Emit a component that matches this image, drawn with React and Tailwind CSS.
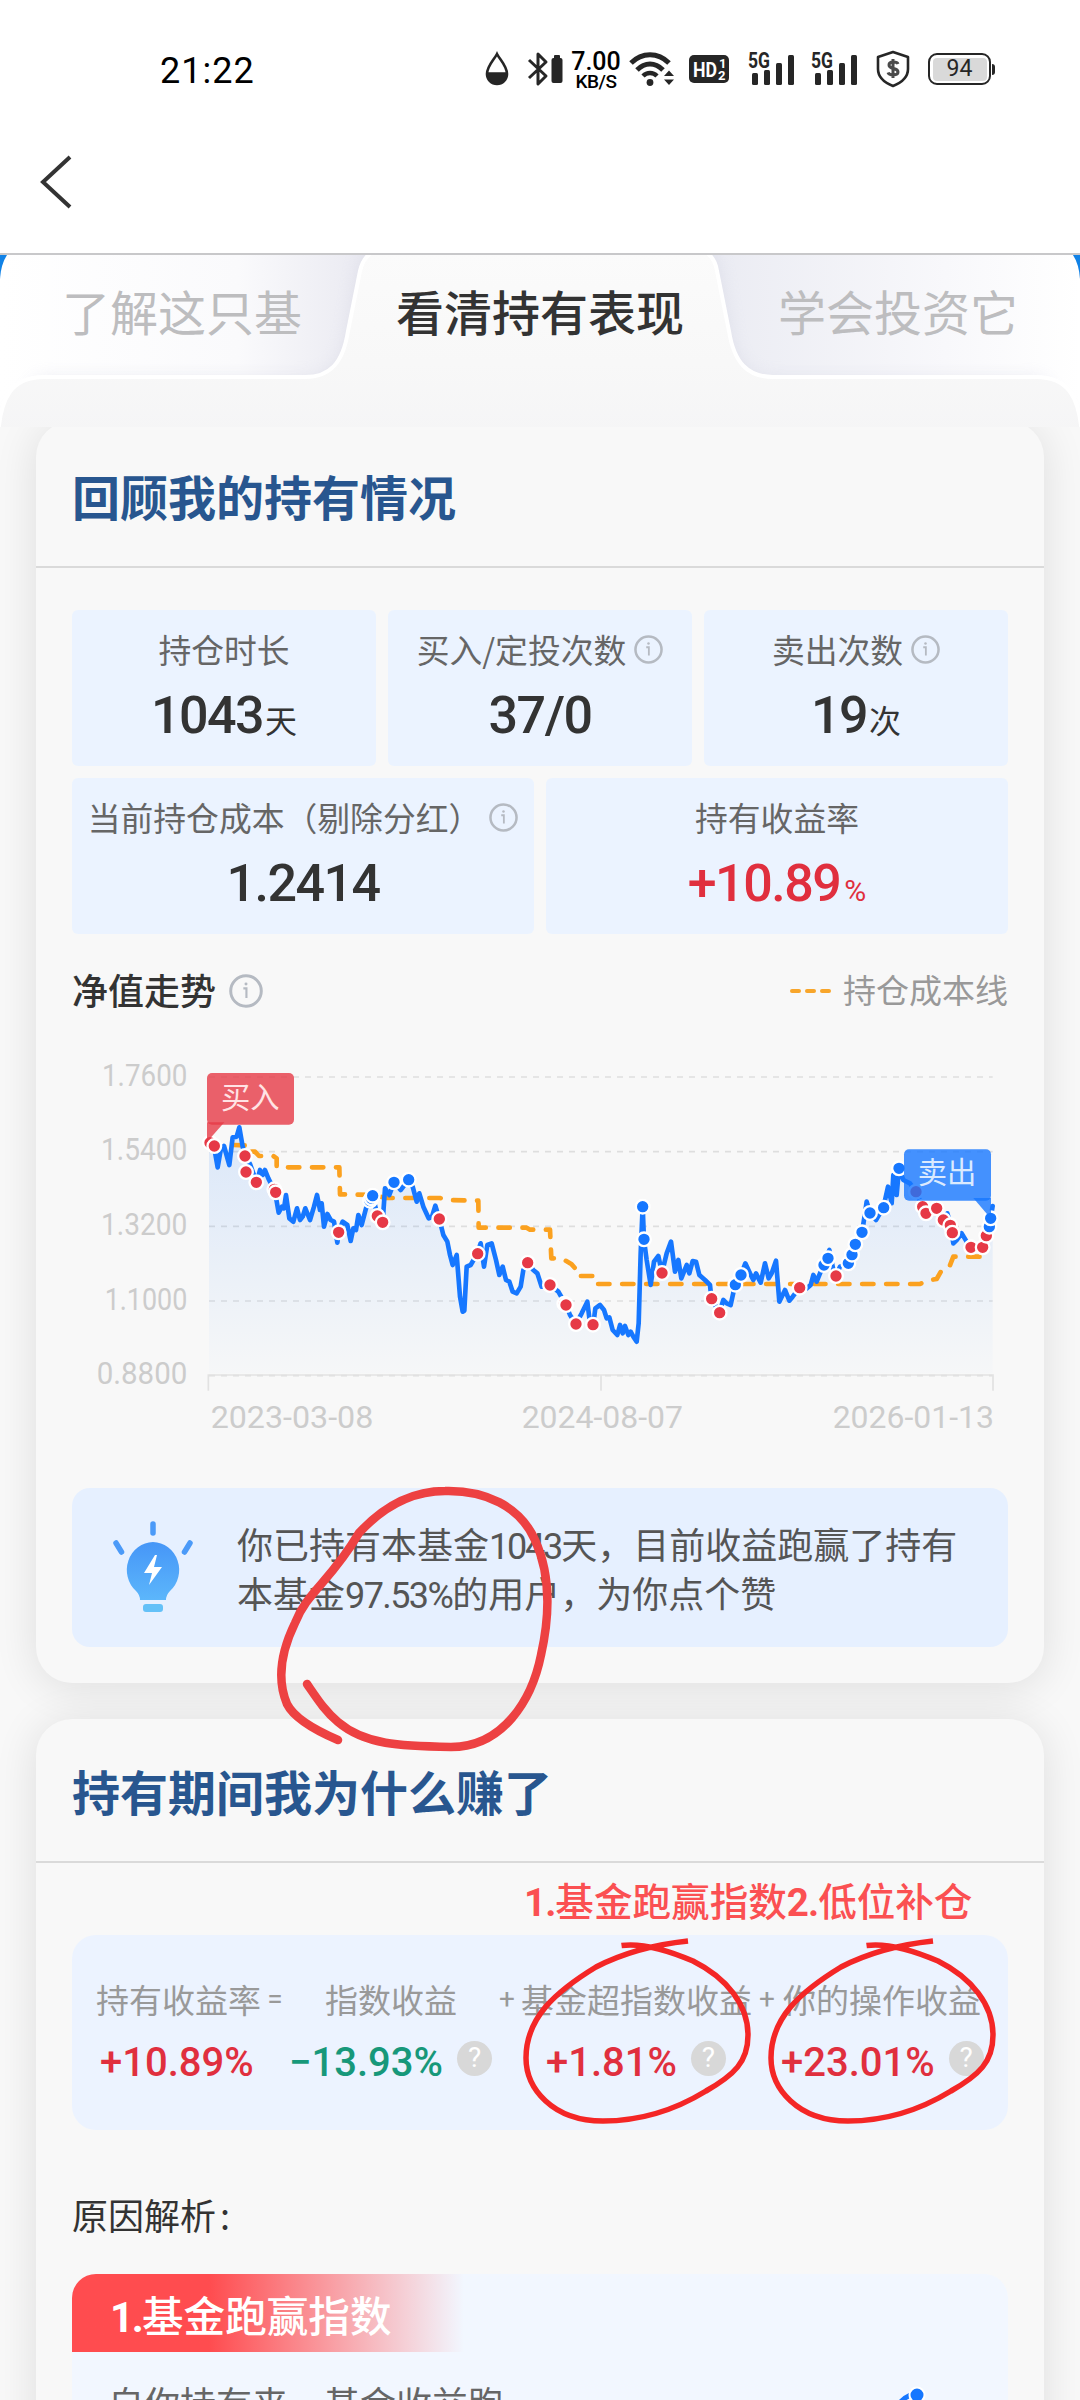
const CJK = "font-['Noto_Sans_CJK_SC',sans-serif]";
const NUM = "font-['Roboto','Noto_Sans_CJK_SC',sans-serif]";

// chart coordinates: 3 units = 1px
const NAV_LINE =
  "440,300 462,320 473,382 482,330 492,318 508,375 518,292 530,290 538,262 548,320 556,350 570,372 580,400 590,428 600,390 608,405 615,390 625,415 645,455 656,518 666,500 672,505 678,465 688,535 700,545 711,505 720,540 728,530 736,505 750,540 762,500 771,465 780,510 785,490 792,560 802,522 812,540 822,545 832,608 836,577 848,545 862,555 872,603 880,565 888,570 895,525 905,555 918,505 938,467 952,525 968,547 975,445 988,465 1002,427 1022,450 1045,420 1058,440 1070,485 1078,460 1090,500 1106,535 1116,530 1126,497 1138,537 1150,585 1162,605 1170,645 1178,675 1190,645 1200,770 1208,815 1213,812 1220,680 1232,675 1252,640 1262,610 1272,680 1282,615 1295,610 1308,660 1318,705 1328,680 1338,720 1348,725 1358,755 1370,760 1382,740 1390,690 1402,668 1420,690 1432,700 1445,740 1470,735 1495,755 1518,795 1530,825 1548,852 1565,820 1582,785 1590,850 1600,853 1606,805 1620,795 1632,810 1640,835 1648,832 1658,870 1672,885 1680,855 1688,880 1695,858 1705,885 1712,875 1720,890 1730,905 1736,850 1742,640 1748,500 1752,600 1760,660 1772,735 1782,665 1795,648 1806,698 1820,640 1833,605 1845,695 1855,660 1864,715 1880,675 1888,700 1898,663 1908,665 1918,705 1935,720 1950,735 1954,775 1978,818 1990,780 2000,790 2012,795 2025,735 2043,705 2056,670 2070,700 2080,720 2088,700 2102,728 2115,670 2126,715 2135,700 2148,662 2158,785 2175,750 2188,782 2198,770 2219,743 2240,745 2252,735 2260,705 2270,725 2290,675 2308,630 2320,690 2328,708 2340,680 2365,670 2375,643 2385,613 2406,577 2415,520 2420,485 2430,520 2448,540 2470,503 2484,440 2495,490 2500,405 2510,465 2517,385 2530,420 2550,430 2568,455 2588,500 2598,520 2628,505 2650,540 2662,520 2672,555 2680,610 2690,600 2705,580 2720,605 2734,622 2768,622 2780,587 2788,560 2792,535 2798,498";

const COST_LINE =
  "520,315 556,316 558,335 585,335 597,348 640,348 650,355 650,382 838,382 840,463 935,465 980,474 1140,474 1165,480 1255,482 1256,563 1400,563 1410,569 1470,569 1474,655 1505,655 1535,673 1550,690 1552,708 1598,708 1602,732 2580,732 2600,722 2630,717 2650,682 2670,676 2680,650 2782,650";

const POINTS = [
  ["b", 450, 308], ["b", 463, 318], ["b", 555, 348], ["b", 558, 396], ["b", 589, 427], ["b", 643, 448], ["b", 647, 457],
  ["b", 836, 577], ["s", 930, 482], ["s", 934, 475], ["s", 938, 467], ["b", 952, 528], ["b", 968, 547],
  ["s", 1002, 427], ["s", 1046, 419], ["b", 1138, 537], ["b", 1253, 641], ["b", 1403, 668], ["b", 1470, 735],
  ["b", 1513, 791], ["b", 1518, 795], ["b", 1548, 852], ["b", 1599, 854], ["s", 1748, 500], ["s", 1752, 598],
  ["b", 1806, 699], ["b", 1955, 776], ["b", 1979, 818], ["s", 2026, 734], ["s", 2043, 705], ["b", 2219, 743],
  ["s", 2292, 675], ["s", 2304, 655], ["b", 2328, 708], ["s", 2365, 670], ["s", 2376, 644], ["s", 2386, 613],
  ["s", 2406, 577], ["s", 2430, 519], ["s", 2471, 503], ["s", 2517, 385], ["b", 2568, 455], ["b", 2588, 500],
  ["b", 2598, 520], ["b", 2630, 505], ["b", 2650, 540], ["b", 2671, 556], ["b", 2677, 578], ["b", 2733, 622],
  ["b", 2768, 622], ["b", 2779, 587], ["s", 2788, 560], ["s", 2792, 535],
];

const Y_AXIS = [
  { label: "1.7600", y: 111, w: 256 },
  { label: "1.5400", y: 335, w: 259 },
  { label: "1.3200", y: 559, w: 259 },
  { label: "1.1000", y: 783, w: 248 },
  { label: "0.8800", y: 1007, w: 272 },
];

const InfoIcon = ({ className = "size-7" }) => (
  <svg className={className} viewBox="0 0 32 32" fill="none" stroke="#b5bac2">
    <circle cx="16" cy="16" r="14.4" strokeWidth="2.8" />
    <path d="M13.5 13.5H16.4V22.5" strokeWidth="2" />
    <circle cx="16" cy="9.4" r="1.4" fill="#b5bac2" stroke="none" />
  </svg>
);

const Help = ({ className = "" }) => (
  <span className={`flex size-[35px] shrink-0 items-center justify-center rounded-full bg-[#d8d8d8] text-[28px] font-normal leading-none text-white ${NUM} ${className}`}>
    ?
  </span>
);

const Signal = ({ className }) => (
  <svg className={className} width="47" height="50" viewBox="0 -8 47 50" fill="#262626">
    <text x="0" y="16" fontFamily="Roboto" fontWeight="700" fontSize="22" textLength="22" lengthAdjust="spacingAndGlyphs">5G</text>
    <rect x="4" y="21" width="6" height="12" rx="1.5" />
    <rect x="16" y="18" width="6" height="15" rx="1.5" />
    <rect x="28" y="11" width="6" height="22" rx="1.5" />
    <rect x="40" y="3" width="6" height="30" rx="1.5" />
  </svg>
);

const StatusBar = () => (
  <div className={`flex h-[138px] items-center pl-[160px] text-black ${NUM}`}>
    <span className="w-[324px] pt-[3px] text-[36px] tracking-[1px]">21:22</span>
    <svg width="26" height="36" viewBox="0 0 26 36">
      <path d="M13 3C10 9 3 15 3 23A10 10 0 0 0 23 23C23 15 16 9 13 3Z" fill="white" stroke="#262626" strokeWidth="2.6" />
      <path d="M3 22H23A10 10.5 0 0 1 3 22Z" fill="#262626" stroke="#262626" strokeWidth="1.5" />
    </svg>
    <svg className="ml-[17px]" width="36" height="36" viewBox="0 0 36 36" fill="none" stroke="#262626">
      <path d="M2 9L19 25L11 33V3L19 11L2 27" strokeWidth="3" strokeLinejoin="round" />
      <rect x="24.500" y="7" width="11" height="25" rx="2" fill="#262626" stroke="none" />
      <rect x="27" y="4" width="6" height="4" rx="1" fill="#262626" stroke="none" />
    </svg>
    <div className="ml-2 flex w-[50px] flex-col items-center pt-[3px] font-medium leading-none">
      <span className="text-[25px] leading-[19px]">7.00</span>
      <span className="mt-[2px] text-[19px] leading-[17px] tracking-[-0.5px]">KB/S</span>
    </div>
    <svg className="ml-[8px]" width="46" height="36" viewBox="0 0 46 36" fill="none" stroke="#262626">
      <path d="M2 12C13 1 29 1 40 12" strokeWidth="5" />
      <path d="M8 19C16 11 26 11 34 19" strokeWidth="5" />
      <path d="M14 25C18 21 24 21 28 25" strokeWidth="4.500" />
      <circle cx="21" cy="31.500" r="3.400" fill="#262626" stroke="none" />
      <path d="M35 25L40 19.500L45 25ZM35 28.500L40 34L45 28.500Z" fill="#262626" stroke="none" />
    </svg>
    <svg className="ml-[14px]" width="40" height="32" viewBox="0 0 40 32">
      <rect y="2" width="40" height="28" rx="5" fill="#262626" />
      <g fill="white" fontFamily="Roboto" fontWeight="700">
        <text x="4" y="23.500" fontSize="21" textLength="24" lengthAdjust="spacingAndGlyphs">HD</text>
        <text x="30" y="15" fontSize="13">1</text>
        <text x="29" y="27" fontSize="13">2</text>
      </g>
    </svg>
    <Signal className="ml-[19px]" />
    <Signal className="ml-[16px]" />
    <svg className="ml-[18px]" width="34" height="38" viewBox="0 0 34 38" fill="none" stroke="#262626">
      <path d="M17 2L32 7V19C32 27 27 32 17 36C7 32 2 27 2 19V7Z" strokeWidth="2.600" strokeLinejoin="round" />
      <path d="M22 14C21 11.500 13 11 13 15C13 20 22 17 22 22C22 26 13 25.500 12 22.500M17 9V28" stroke="#4a4a4a" strokeWidth="3" />
    </svg>
    <div className="ml-[18px] flex h-[32px] w-[63px] rounded-[9px] border-[2.500px] border-[#262626] p-[2.500px]">
      <span className="flex flex-1 items-center justify-center rounded-[4px] bg-[#d9d9d9] text-[23px] text-[#262626]">94</span>
    </div>
    <span className="ml-[1px] h-[11px] w-[3px] rounded-r bg-[#262626]" />
  </div>
);

const TabBar = () => (
  <div className="relative z-10 h-[172px] overflow-hidden">
    <svg className="absolute inset-0" width="1080" height="172" viewBox="0 0 1080 172">
      <defs>
        <linearGradient id="tabL">
          <stop offset="0" stopColor="#ffffff" />
          <stop offset="0.22" stopColor="#fafafc" />
          <stop offset="0.33" stopColor="#ebebf2" />
        </linearGradient>
        <linearGradient id="tabR">
          <stop offset="0.33" stopColor="#ebecf3" />
          <stop offset="0.75" stopColor="#f8f8fb" />
          <stop offset="1" stopColor="#ffffff" />
        </linearGradient>
        <linearGradient id="panel" x2="0" y2="1">
          <stop offset="0" stopColor="#fbfbfb" />
          <stop offset="0.6" stopColor="#f8f8f8" />
          <stop offset="1" stopColor="#f5f5f6" />
        </linearGradient>
        <filter id="rim" x="-10%" y="-20%" width="120%" height="140%">
          <feGaussianBlur stdDeviation="9" />
        </filter>
      </defs>
      <rect width="1080" height="172" fill="#1182e6" />
      <path d="M0 172V24Q1 9 7 0H1080V172Z" fill="url(#tabL)" />
      <path d="M1080 172V24Q1079 9 1073 0H540V172Z" fill="url(#tabR)" />
      <path d="M1073 0H1080V24Q1079 9 1073 0Z" fill="#1182e6" />
      <path d="M40 124H305C330 124 344 108 349 76L360 12Q363 0 372 -8H706Q716 0 718 12L729 76C734 108 748 124 773 124H1040L1090 190H-10Z" fill="#c9cadb" opacity="0.42" filter="url(#rim)" />
      <path d="M-2 182C0 142 12 122 44 122H305C330 122 343 108 348 76L360 16Q363 2 374 -4H704Q715 2 717 16L729 76C734 108 748 122 773 122H1036C1068 122 1080 142 1082 182Z" fill="url(#panel)" stroke="#ffffff" strokeWidth="4" />
    </svg>
    <div className="relative flex h-[109px] items-center justify-between px-[62px] text-[48px] leading-none">
      <span className="w-[300px] whitespace-nowrap text-[#bdbdbf]">了解这只基</span>
      <span className="font-medium text-[#333333]">看清持有表现</span>
      <span className="w-[300px] whitespace-nowrap text-right text-[#bdbdbf]">学会投资它</span>
    </div>
  </div>
);

const CardTitle = ({ children, className }) => (
  <div className={`flex items-center border-b-2 border-[#dadada] px-9 ${className}`}>
    <h2 className="text-[48px] font-bold leading-none text-[#28568f]">{children}</h2>
  </div>
);

const Stat = ({ label, info, infoGap = "ml-2", value, unit, red, smallUnit, className }) => (
  <div className={`flex h-[156px] flex-col items-center rounded-md bg-[#ebf3ff] pt-[15px] ${className}`}>
    <div className="flex h-12 items-center whitespace-nowrap text-[32.800px] leading-none text-[#666666]">
      {label}
      {info && <InfoIcon className={`size-[29px] ${infoGap}`} />}
    </div>
    <div className={`mt-[11px] flex h-16 items-baseline text-[52px] font-medium leading-[64px] ${NUM} ${red ? "text-[#e02f3e]" : "text-[#333333]"}`}>
      <span className="tracking-[-1.500px]">{value}</span>
      {unit && <span className={`font-normal ${smallUnit ? "ml-1 text-[30px]" : "ml-0.5 text-[32px]"}`}>{unit}</span>}
    </div>
  </div>
);

const NavChart = () => (
  <svg className="block" width="936" height="400" viewBox="36 0 2808 1200" fontFamily="Roboto">
    <defs>
      <linearGradient id="area" x2="0" y2="1">
        <stop offset="0" stopColor="#1677ff" stopOpacity="0.13" />
        <stop offset="1" stopColor="#1677ff" stopOpacity="0.01" />
      </linearGradient>
    </defs>
    {Y_AXIS.map(({ label, y, w }) => (
      <g key={label}>
        <text x={382 - w} y={y + 26} fontSize="96" fill="#cccccc" textLength={w} lengthAdjust="spacingAndGlyphs">
          {label}
        </text>
        <path d={`M447 ${y}H2798`} stroke="#dedede" strokeWidth="5" strokeDasharray="18 18" />
      </g>
    ))}
    <path d="M445 1052V1005H2799V1052M1623 1005V1052" fill="none" stroke="#e2e2e2" strokeWidth="5" />
    <g fontSize="94" fill="#cccccc">
      <text x="452" y="1163" textLength="488" lengthAdjust="spacingAndGlyphs">2023-03-08</text>
      <text x="1385" y="1163" textLength="484" lengthAdjust="spacingAndGlyphs">2024-08-07</text>
      <text x="2318" y="1163" textLength="484" lengthAdjust="spacingAndGlyphs">2026-01-13</text>
    </g>
    <polygon points={`447,1000 447,300 ${NAV_LINE} 2798,1000`} fill="url(#area)" />
    <polyline points={COST_LINE} fill="none" stroke="#fba11f" strokeWidth="14" strokeLinecap="round" strokeLinejoin="round" strokeDasharray="34 38" />
    <polyline points={NAV_LINE} fill="none" stroke="#1677ff" strokeWidth="14" strokeLinecap="round" strokeLinejoin="round" />
    {POINTS.map(([type, x, y], index) => (
      <circle key={index} cx={x} cy={y} r="20.500" fill={type === "b" ? "#e63946" : "#1677ff"} stroke="white" strokeWidth="7" />
    ))}
    <g fontFamily="Noto Sans CJK SC" fontSize="88" textAnchor="middle">
      <rect x="441" y="99" width="261" height="155" rx="15" fill="#e63946" opacity="0.8" />
      <path d="M441 247H493L441 306Z" fill="#e63946" opacity="0.8" />
      <text x="571" y="203" fill="#ffe3e5">买入</text>
      <rect x="2532" y="328" width="261" height="154" rx="15" fill="#1677ff" opacity="0.8" />
      <path d="M2740 474H2793V536Z" fill="#1677ff" opacity="0.8" />
      <text x="2661" y="430" fill="#dbeafe">卖出</text>
    </g>
  </svg>
);

const BulbIcon = () => (
  <svg width="84" height="100" viewBox="0 0 84 100" fill="none">
    <defs>
      <linearGradient id="bulb" x2="0" y2="1">
        <stop offset="0" stopColor="#4696f7" />
        <stop offset="1" stopColor="#5cb6fb" />
      </linearGradient>
    </defs>
    <path d="M42 6V15M5 25L10.500 34M79 25L73.500 34" stroke="#4b9af8" strokeWidth="5.500" strokeLinecap="round" />
    <path d="M42 24A27 28 0 0 0 25 73Q29 77 29 82H55Q55 77 59 73A27 28 0 0 0 42 24Z" fill="url(#bulb)" />
    <rect x="32" y="86" width="20" height="8" rx="3" fill="#64c1f8" />
    <path d="M44 37L33 55H41L38 67L51 49H43L46 37Z" fill="white" />
  </svg>
);

const Term = ({ label, value, green, className, labelClass = "", valueClass = "", help = true }) => (
  <div className={`flex shrink-0 flex-col ${className}`}>
    <span className={`flex h-[50px] items-center whitespace-nowrap text-[33px] leading-none text-[#999999] ${labelClass}`}>{label}</span>
    <div className={`mt-[11px] flex h-[50px] items-center whitespace-nowrap text-[40px] font-medium leading-none ${NUM} ${green ? "text-[#17987a]" : "text-[#e02f3e]"} ${valueClass}`}>
      <span className="pt-[6px]">{value}</span>
      {help && <Help className="mb-1 ml-[14px]" />}
    </div>
  </div>
);

const Operator = ({ children, className }) => (
  <span className={`flex h-[50px] w-4 shrink-0 items-center justify-center text-[28px] text-[#999999] ${NUM} ${className}`}>{children}</span>
);

const LOOP =
  "M621.5 1945.500C640 1943 665 1949 693 1961C727 1978 748 2005 748 2035C748 2062 734 2075 706 2091C675 2110 640 2121 603 2121C552 2121 526 2088 526 2058C526 2018 555 1992 596 1967C625 1952 660 1944 688 1941";

// hand drawn marks on top of the page
const Marks = () => (
  <svg className="pointer-events-none absolute inset-0 z-20" width="1080" height="2400" viewBox="0 0 1080 2400" fill="none">
    <path
      d="M338 1740C310 1728 293 1716 287 1704C279 1685 277 1660 295 1623C307 1592 330 1582 359 1533C382 1508 410 1491 445 1491C485 1490 520 1506 535 1540C551 1575 550 1615 541 1655C532 1700 503 1747 451 1747C400 1746 365 1745 338 1722C325 1711 318 1700 307 1684"
      stroke="#ed4142"
      strokeWidth="8.500"
      strokeLinecap="round"
      strokeLinejoin="round"
    />
    <path d={LOOP} stroke="#f42626" strokeWidth="5.500" />
    <path d={LOOP} transform="translate(245 0)" stroke="#f42626" strokeWidth="5.500" />
  </svg>
);

const App = () => {
  return (
    <div className={`relative h-[2400px] w-[1080px] overflow-hidden bg-[#f8f8f8] ${CJK}`}>
      <header className="h-[255px] border-b-2 border-[#c8c8ca] bg-white">
        <StatusBar />
        <svg className="ml-[38px] mt-[16px]" width="38" height="56" viewBox="0 0 38 56" fill="none">
          <path d="M32 3L5 28L32 53" stroke="#333333" strokeWidth="4" />
        </svg>
      </header>

      <TabBar />

      <main className="-mt-[6px] flex flex-col gap-9 px-9">
        {/* Holding review */}
        <section className="h-[1262px] rounded-[36px] bg-[#f8f8f8] shadow-[0_4px_44px_rgba(0,0,0,0.11)]">
          <CardTitle className="h-[147px] pt-[3px]">回顾我的持有情况</CardTitle>
          <div className="px-9 pt-[42px]">
            <div className="grid grid-cols-6 gap-3">
              <Stat className="col-span-2" label="持仓时长" value="1043" unit="天" />
              <Stat className="col-span-2" label="买入/定投次数" info value="37/0" />
              <Stat className="col-span-2" label="卖出次数" info value="19" unit="次" />
              <Stat className="col-span-3" label="当前持仓成本（剔除分红）" info infoGap="ml-2" value="1.2414" />
              <Stat className="col-span-3" label="持有收益率" value="+10.89" unit="%" red smallUnit />
            </div>

            <div className="flex h-[106px] items-center justify-between pt-[7px]">
              <div className="flex items-center text-[36px] font-medium leading-none text-[#333333]">
                <span className="pb-[3px]">净值走势</span>
                <InfoIcon className="ml-[13px] size-[34px]" />
              </div>
              <div className="flex items-center gap-3 text-[33px] leading-none text-[#999999]">
                <span className="flex gap-1">
                  <i className="h-1 w-[11px] rounded-full bg-[#f8a62b]" />
                  <i className="h-1 w-[11px] rounded-full bg-[#f8a62b]" />
                  <i className="h-1 w-[11px] rounded-full bg-[#f8a62b]" />
                </span>
                <span className="pb-[2px]">持仓成本线</span>
              </div>
            </div>

            <NavChart />

            <div className="mt-12 flex h-[159px] items-center rounded-[18px] bg-[#e6f0ff] pl-[39px]">
              <BulbIcon />
              <p className="ml-[42px] whitespace-nowrap text-[36px] leading-[49px] text-[#555555]">
                你已持有本基金<span className={`leading-none tracking-[-2.200px] ${NUM}`}>1043</span>天，目前收益跑赢了持有
                <br />
                本基金<span className={`leading-none tracking-[-1.600px] ${NUM}`}>97.53%</span>的用户，为你点个赞
              </p>
            </div>
          </div>
        </section>

        {/* Return breakdown */}
        <section className="h-[760px] rounded-t-[36px] bg-[#f8f8f8] shadow-[0_4px_44px_rgba(0,0,0,0.11)]">
          <CardTitle className="h-[144px]">持有期间我为什么赚了</CardTitle>
          <div className="px-9">
            <p className={`h-[72px] whitespace-nowrap pl-[452px] pt-[3px] text-[38.600px] font-medium leading-[66px] text-[#fb5052] ${CJK}`}>
              <b className={`leading-none tracking-[-1px] ${NUM}`}>1.</b>基金跑赢指数<b className={`leading-none tracking-[-1px] ${NUM}`}>2.</b>低位补仓
            </p>
            <div className="flex h-[195px] rounded-[24px] bg-[#ecf3ff] pl-6 pt-[39px]">
              <Term className="w-[170px]" label="持有收益率" value="+10.89%" help={false} valueClass="pl-1" />
              <Operator className="ml-[1px]">=</Operator>
              <Term className="ml-[6px] w-[209px]" label="指数收益" value="−13.93%" green labelClass="pl-[36px]" />
              <Operator className="ml-[1px]">+</Operator>
              <Term className="ml-[6px] w-[232px]" label="基金超指数收益" value="+1.81%" valueClass="pl-[25px]" />
              <Operator className="ml-[6px]">+</Operator>
              <Term className="ml-[8px]" label="你的操作收益" value="+23.01%" valueClass="-ml-[2px]" />
            </div>

            <p className="mt-[60px] flex h-12 items-center text-[36px] leading-none text-[#333333]">
              原因解析<span className="ml-1">:</span>
            </p>

            <div className="mt-[36px] h-[220px] overflow-hidden rounded-[24px] bg-[#f2f7ff]">
              <h3 className="h-[78px] w-[392px] whitespace-nowrap bg-linear-to-r from-[#ff4c4f] from-35% to-[#ff4c4f]/0 pl-[38px] text-[41.600px] font-medium leading-[80px] text-white">
                <b className={`leading-none tracking-[-2px] ${NUM}`}>1.</b>基金跑赢指数
              </h3>
              <div className="flex justify-between pl-9 pr-[78px] pt-[32px]">
                <p className="text-[36px] leading-none text-[#666666]">自你持有来，基金收益跑</p>
                <svg width="40" height="40" viewBox="0 0 40 40">
                  <path d="M6 22L15 14L26 8" fill="none" stroke="#1677ff" strokeWidth="5" />
                  <circle cx="27" cy="11" r="7.500" fill="#1677ff" stroke="white" strokeWidth="2" />
                </svg>
              </div>
            </div>
          </div>
        </section>
      </main>

      <Marks />
    </div>
  );
};

export default App;
